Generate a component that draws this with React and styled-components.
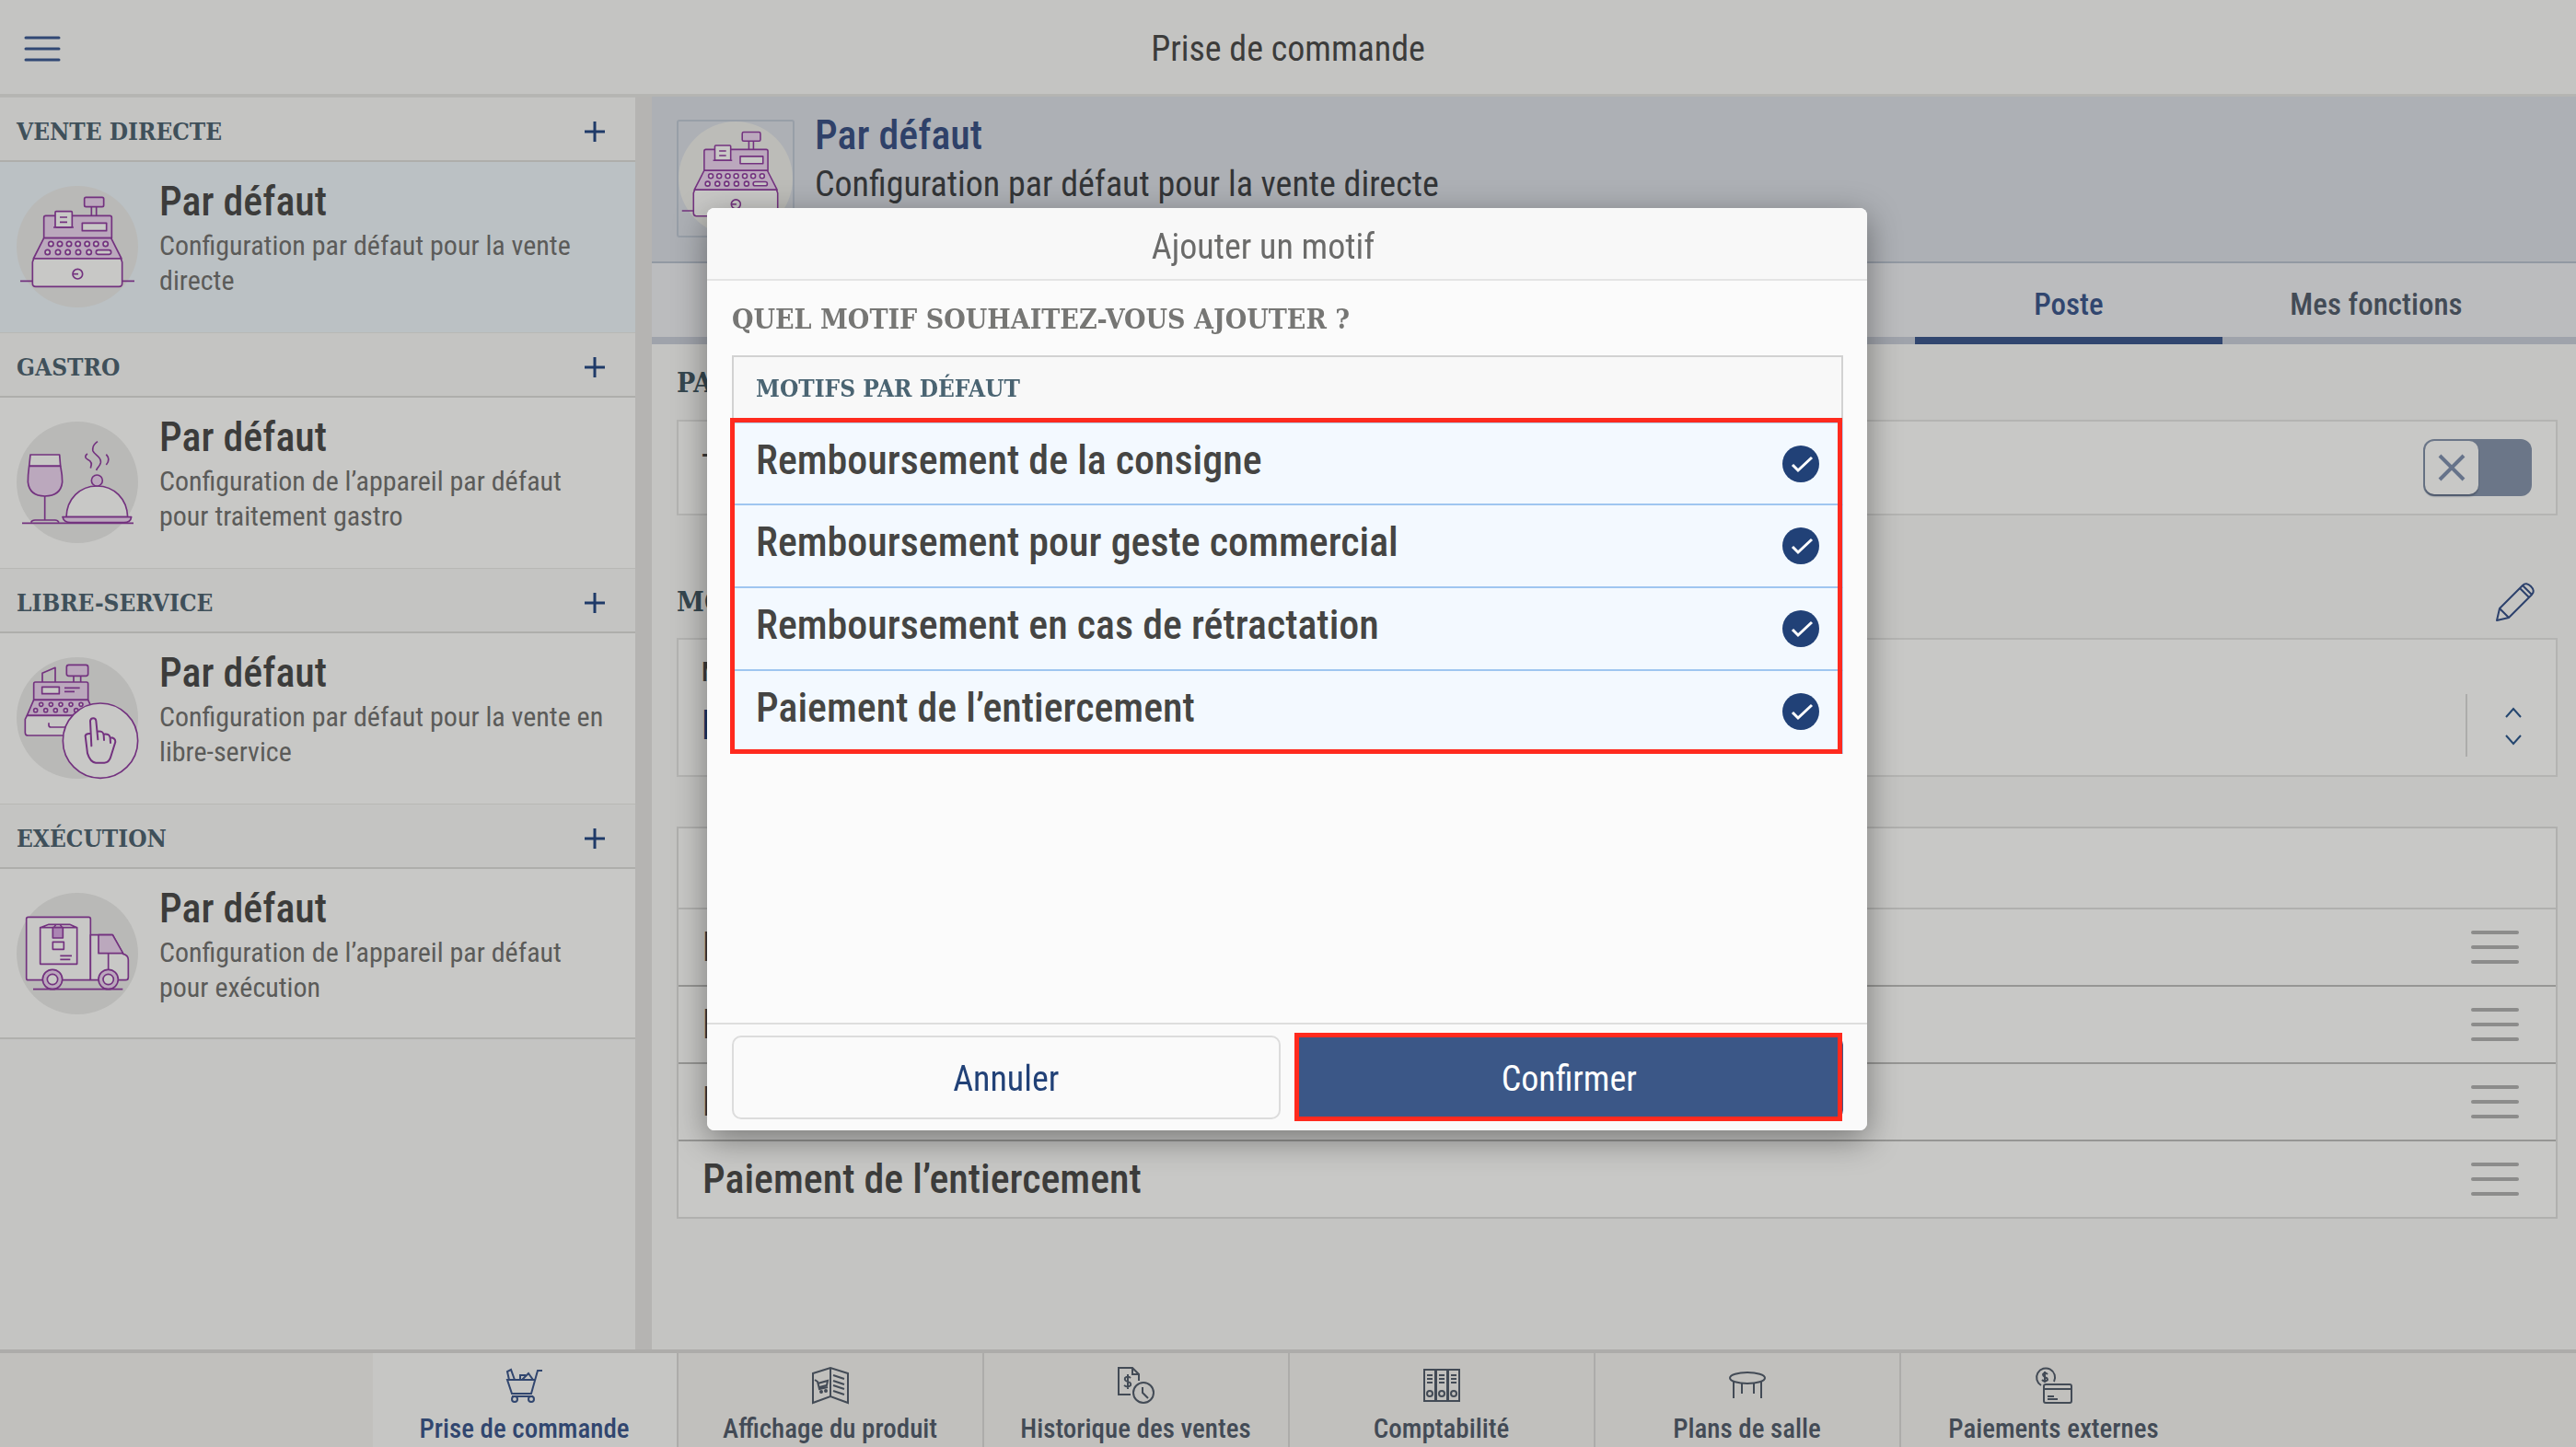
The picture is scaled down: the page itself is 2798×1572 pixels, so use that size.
import React, { useState } from "react";
import styled, { createGlobalStyle } from "styled-components";

const navItems = [
  { label: "Prise de commande", icon: CartIcon },
  { label: "Affichage du produit", icon: BrochureIcon },
  { label: "Historique des ventes", icon: HistoryIcon },
  { label: "Comptabilité", icon: BindersIcon },
  { label: "Plans de salle", icon: TableIcon },
  { label: "Paiements externes", icon: PaymentIcon },
];

const sections = [
  {
    header: "VENTE DIRECTE",
    text: "Configuration par défaut pour la vente directe",
    icon: RegisterIcon,
  },
  {
    header: "GASTRO",
    text: "Configuration de l’appareil par défaut pour traitement gastro",
    icon: GastroIcon,
  },
  {
    header: "LIBRE-SERVICE",
    text: "Configuration par défaut pour la vente en libre-service",
    icon: SelfServiceIcon,
  },
  {
    header: "EXÉCUTION",
    text: "Configuration de l’appareil par défaut pour exécution",
    icon: TruckIcon,
  },
];

const reasons = [
  "Remboursement de la consigne",
  "Remboursement pour geste commercial",
  "Remboursement en cas de rétractation",
  "Paiement de l’entiercement",
];

function App() {
  return (
    <>
      <GlobalStyle />
      <Page>
        <TopBar>
          <MenuButton aria-label="Menu">
            <LinesIcon width={40} height={30} gap={12} stroke={3} />
          </MenuButton>
          <PageTitle>Prise de commande</PageTitle>
        </TopBar>
        <Middle>
          <SideBar />
          <Content />
        </Middle>
        <BottomNav />
      </Page>
      <ReasonDialog />
    </>
  );
}

export default App;

function SideBar() {
  const [selected, setSelected] = useState(0);

  return (
    <SideBarStyled>
      {sections.map((section, index) => (
        <section key={section.header}>
          <SectionHeader>
            <SmallHeading>{section.header}</SmallHeading>
            <AddButton aria-label={`Ajouter ${section.header}`}>
              <svg width="22" height="22" viewBox="0 0 22 22">
                <path d="M11 0V22M0 11H22" />
              </svg>
            </AddButton>
          </SectionHeader>
          <SectionItem
            $active={selected === index}
            onClick={() => setSelected(index)}
          >
            <section.icon />
            <ItemText>
              <ItemTitle>Par défaut</ItemTitle>
              <ItemSub>{section.text}</ItemSub>
            </ItemText>
          </SectionItem>
        </section>
      ))}
    </SideBarStyled>
  );
}

function Content() {
  const [tab, setTab] = useState("Poste");

  return (
    <ContentStyled>
      <Banner>
        <BannerIcon>
          <RegisterIcon />
        </BannerIcon>
        <div>
          <BannerTitle>Par défaut</BannerTitle>
          <BannerSub>Configuration par défaut pour la vente directe</BannerSub>
        </div>
      </Banner>
      <Tabs>
        {["Poste", "Mes fonctions"].map((name) => (
          <Tab key={name} $active={tab === name} onClick={() => setTab(name)}>
            {name}
          </Tab>
        ))}
      </Tabs>
      <Settings>
        <HeadingRow>
          <Heading>PARAMÈTRES</Heading>
        </HeadingRow>
        <SwitchCard>
          <SwitchLabel htmlFor="reason">Toujours demander</SwitchLabel>
          <Switch>
            <HiddenInput id="reason" type="checkbox" />
            <Knob>
              <svg width="28" height="28" viewBox="0 0 28 28">
                <path d="M1 1L27 27M27 1L1 27" />
              </svg>
            </Knob>
          </Switch>
        </SwitchCard>
        <HeadingRow $spaced>
          <Heading>MOTIFS</Heading>
          <EditButton aria-label="Modifier">
            <PencilIcon />
          </EditButton>
        </HeadingRow>
        <SelectCard>
          <SelectLabel htmlFor="default-reason">Motif</SelectLabel>
          <SelectRow>
            <Select id="default-reason">
              {reasons.map((reason) => (
                <option key={reason}>{reason}</option>
              ))}
            </Select>
            <Arrows>
              <svg width="20" height="42" viewBox="0 0 20 42">
                <path d="M2 11L10 2L18 11M2 31L10 40L18 31" />
              </svg>
            </Arrows>
          </SelectRow>
        </SelectCard>
        <ReasonTable>
          <TableTop />
          {reasons.map((reason) => (
            <TableRow key={reason}>
              <span>{reason}</span>
              <DragButton aria-label={`Déplacer ${reason}`}>
                <LinesIcon width={52} height={36} gap={16} stroke={4} />
              </DragButton>
            </TableRow>
          ))}
        </ReasonTable>
      </Settings>
    </ContentStyled>
  );
}

function BottomNav() {
  return (
    <NavStyled>
      {navItems.map((item, index) => (
        <NavItem key={item.label} href="#" $active={index === 0}>
          <item.icon />
          <span>{item.label}</span>
        </NavItem>
      ))}
    </NavStyled>
  );
}

function ReasonDialog() {
  const [checked, setChecked] = useState(reasons);

  function toggle(reason) {
    setChecked((previous) =>
      previous.includes(reason)
        ? previous.filter((r) => r !== reason)
        : [...previous, reason]
    );
  }

  return (
    <Overlay>
      <Dialog role="dialog" aria-labelledby="dialog-title">
        <DialogHeader id="dialog-title">Ajouter un motif</DialogHeader>
        <DialogBody>
          <Question>QUEL MOTIF SOUHAITEZ-VOUS AJOUTER ?</Question>
          <GroupHeader>
            <SmallHeading $light>MOTIFS PAR DÉFAUT</SmallHeading>
          </GroupHeader>
          <CheckList>
            {reasons.map((reason) => (
              <CheckRow key={reason}>
                <span>{reason}</span>
                <HiddenInput
                  type="checkbox"
                  checked={checked.includes(reason)}
                  onChange={() => toggle(reason)}
                />
                <CheckMark viewBox="0 0 40 40">
                  <circle cx="20" cy="20" r="20" />
                  <path d="M11 21L17 27L32 13" />
                </CheckMark>
              </CheckRow>
            ))}
          </CheckList>
        </DialogBody>
        <DialogFooter>
          <DialogButton>Annuler</DialogButton>
          <ConfirmButton>Confirmer</ConfirmButton>
        </DialogFooter>
      </Dialog>
    </Overlay>
  );
}

/* icons */

function LinesIcon({ width, height, gap, stroke }) {
  const middle = height / 2;
  return (
    <svg
      width={width}
      height={height}
      fill="none"
      stroke="currentColor"
      strokeWidth={stroke}
      strokeLinecap="round"
    >
      {[middle - gap, middle, middle + gap].map((y) => (
        <path key={y} d={`M2 ${y}H${width - 2}`} />
      ))}
    </svg>
  );
}

function RegisterIcon() {
  return (
    <Illustration viewBox="54 66 396 396">
      <circle className="disc" cx="252" cy="264" r="198" />
      <path d="M66 376H106M398 376H438" />
      <rect className="tint" x="275" y="103" width="63" height="31" rx="5" />
      <path d="M298 134V163M314 134V163" />
      <path className="tint" d="M143 236V169Q143 163 149 163H358Q364 163 364 169V236Z" />
      <rect className="paper" x="180" y="149" width="55" height="52" rx="3" />
      <path d="M174 201H240M195 168H219M195 184H219" />
      <rect className="paper" x="268" y="187" width="79" height="25" />
      <path className="tint" d="M143 236H362L396 303H109Z" />
      {[166, 195, 225, 254, 284, 313, 344].map((x) => (
        <circle key={x} className="paper" cx={x} cy="255" r="8" />
      ))}
      {[155, 189, 221, 255, 290].map((x) => (
        <circle key={x} className="paper" cx={x} cy="282" r="8" />
      ))}
      <rect className="paper" x="313" y="275" width="49" height="14" rx="7" />
      <path className="paper" d="M110 303H394L398 314V384Q398 394 388 394H116Q106 394 106 384V314Z" />
      <circle cx="253" cy="353" r="16" />
      <path d="M238 353H255" />
    </Illustration>
  );
}

function GastroIcon() {
  return (
    <Illustration viewBox="0 0 396 396">
      <circle className="disc" cx="198" cy="198" r="198" />
      <path className="paper" d="M45 108H140L143 145H41Z" />
      <path className="tint" d="M41 145H143Q149 172 149 197Q144 243 92 243Q42 243 37 197Q37 172 41 145Z" />
      <path d="M92 243V321M47 329Q50 321 60 321H126Q134 321 138 329" />
      <path className="paper" d="M162 311C164 252 206 210 262 210C318 210 360 252 362 311Z" />
      <circle className="tint" cx="262" cy="192" r="18" />
      <path className="tint" d="M150 311H374Q372 329 350 329H176Q154 329 150 311Z" />
      <path d="M18 331H381" />
      <path d="M264 65C254 72 246 84 249 96C254 110 277 112 274 134C272 146 262 150 260 159" />
      <path d="M231 105C222 110 222 120 232 124C246 130 246 140 241 152M292 107C302 118 302 130 292 141" />
    </Illustration>
  );
}

function SelfServiceIcon() {
  return (
    <Illustration viewBox="54 42 396 396">
      <circle className="disc" cx="252" cy="240" r="198" />
      <rect className="tint" x="217" y="67" width="70" height="36" rx="7" />
      <path d="M240 103V123M263 103V123M138 123V94L180 76V123" />
      <path className="tint" d="M110 181V128Q110 123 115 123H282Q287 123 287 128V181Z" />
      <rect className="paper" x="137" y="139" width="56" height="22" />
      <path d="M210 142H260M210 154H243" />
      <path className="tint" d="M110 181H287L310 232H88Z" />
      {[134, 166, 198, 231, 264].map((x) => (
        <circle key={x} className="paper" cx={x} cy="196" r="6" />
      ))}
      {[116, 149, 181, 214, 248].map((x) => (
        <circle key={x} className="paper" cx={x} cy="215" r="6" />
      ))}
      <path className="paper" d="M88 232H310V297H92Q82 297 82 287V244Z" />
      <path d="M159 256V264Q159 270 166 270H214" />
      <circle className="paper" cx="327" cy="314" r="122" />
      <path
        className="bold"
        d="M298 331L294 249Q296 241 304 241Q312 241 313 249L319 310M317 284Q336 280 338 296L339 312M338 293Q357 290 359 305L360 321M359 304Q376 304 376 318L361 366Q356 385 340 386H312Q294 384 285 355L278 298Q280 290 294 291"
      />
    </Illustration>
  );
}

function TruckIcon() {
  return (
    <Illustration viewBox="0 0 396 396">
      <circle className="disc" cx="198" cy="198" r="198" />
      <rect className="paper" x="32" y="79" width="209" height="205" rx="6" />
      <path className="paper" d="M77 113V232H197V113ZL105 103H173L197 113" />
      <rect className="deep" x="118" y="113" width="33" height="34" />
      <path d="M128 103L122 113M142 103L148 113" />
      <path d="M118 160H154V184H118ZM142 205H180M142 217H175" />
      <path className="paper" d="M241 137H313L347 199Q364 203 364 218V275Q364 284 355 284H241Z" />
      <path className="tint" d="M267 137H313L347 197H267Z" />
      <path d="M299 197V250" />
      <circle className="tint" cx="117" cy="282" r="32" />
      <circle className="paper" cx="117" cy="282" r="17" />
      <circle className="tint" cx="299" cy="282" r="32" />
      <circle className="paper" cx="299" cy="282" r="17" />
      <path d="M54 314H346" />
    </Illustration>
  );
}

function PencilIcon() {
  return (
    <svg width="42" height="42" viewBox="0 0 42 42">
      <path d="M1 41L4 28L29 3Q33 -1 38 4Q43 9 39 13L14 38ZM4 28L14 38M26 6L36 16M29 3L39 13" />
    </svg>
  );
}

function CartIcon() {
  return (
    <NavIcon viewBox="0 0 40 40">
      <path d="M39 4H34L27 29H6L1 14H31M3 14L1 5L5 3L9 14M15 14V9H21M17 14L24 7L29 14M6 32H29" />
      <circle cx="9" cy="35" r="3" />
      <circle cx="27" cy="35" r="3" />
    </NavIcon>
  );
}

function BrochureIcon() {
  return (
    <NavIcon viewBox="0 0 40 40">
      <path d="M1 7L20 1L39 7V39L20 32L1 39ZM20 1V32" />
      <path d="M23 9L35 13M23 15L35 19M23 20L35 24M23 26L35 30" />
      <path d="M3 14L6 16L8 24L17 22M6 18L17 15L16 20L8 22" />
      <circle cx="10" cy="27" r="1" />
      <circle cx="15" cy="26" r="1" />
    </NavIcon>
  );
}

function HistoryIcon() {
  return (
    <NavIcon viewBox="0 0 40 40">
      <path d="M14 30H1V1H16L23 8V15M16 1V8H23M27 22V28L33 34" />
      <path d="M14 12Q11 9 8 12Q7 15 11 16Q15 17 14 20Q11 23 7 20M11 8V24" />
      <circle cx="28" cy="28" r="11" />
    </NavIcon>
  );
}

function BindersIcon() {
  return (
    <NavIcon viewBox="0 0 40 40">
      {[1, 14, 27].map((x) => (
        <g key={x}>
          <rect x={x} y="3" width="12" height="34" />
          <path d={`M${x + 3} 9H${x + 9}M${x + 3} 13H${x + 9}M${x + 3} 17H${x + 9}`} />
          <circle cx={x + 6} cy="29" r="3" />
        </g>
      ))}
    </NavIcon>
  );
}

function TableIcon() {
  return (
    <NavIcon viewBox="0 0 40 40">
      <ellipse cx="20" cy="12" rx="19" ry="6" />
      <path d="M5 16V34M35 16V34M14 18V29M27 18V29" />
    </NavIcon>
  );
}

function PaymentIcon() {
  return (
    <NavIcon viewBox="0 0 40 40">
      <path d="M6 20A10 10 0 1 1 20 16" />
      <path d="M13 8Q10 5 8 8Q8 10 10 11Q13 12 13 14Q10 17 7 14M10 5V17" />
      <rect x="9" y="19" width="30" height="20" rx="2" />
      <path d="M9 24H39M13 32H20M13 35H24" />
    </NavIcon>
  );
}

/* styles */

const GlobalStyle = createGlobalStyle`
  * {
    box-sizing: border-box;
  }

  body {
    margin: 0;
    background: #c4c4c2;
    color: #3c3c3b;
    font-family: "Roboto Condensed", Roboto, "Liberation Sans", sans-serif;
    font-size: 38px;
  }

  button,
  select {
    padding: 0;
    border: 0;
    background: none;
    color: inherit;
    font: inherit;
    cursor: pointer;
  }

  h1,
  h2,
  h3,
  p,
  ul {
    margin: 0;
    padding: 0;
    font-weight: 400;
  }

  svg {
    display: block;
    flex-shrink: 0;
    overflow: visible;
  }
`;

const Page = styled.div`
  display: flex;
  flex-direction: column;
  min-height: 100vh;
`;

const TopBar = styled.header`
  display: grid;
  grid-template-columns: 1fr auto 1fr;
  align-items: center;
  height: 105px;
  padding: 4px 26px 0;
  border-bottom: 3px solid #b5b5b2;
`;

const MenuButton = styled.button`
  justify-self: start;
  color: #314874;
`;

const PageTitle = styled.h1`
  font-size: 38px;
  line-height: 48px;
`;

const Middle = styled.div`
  display: flex;
  flex: 1;
`;

const SideBarStyled = styled.aside`
  flex: 0 0 708px;
  border-right: 18px solid #b5b4b2;
`;

const SectionHeader = styled.div`
  display: flex;
  align-items: center;
  justify-content: space-between;
  height: 71px;
  padding: 6px 33px 0 18px;
  border-top: 1px solid #b8b8b5;
  border-bottom: 2px solid #aeaeab;
`;

const SmallHeading = styled.h2`
  color: ${({ $light }) => ($light ? "#4a6472" : "#3f505a")};
  font-family: "DejaVu Serif Condensed", "DejaVu Serif", serif;
  font-size: 26px;
  font-weight: 700;
  line-height: 36px;
`;

const AddButton = styled.button`
  & path {
    stroke: #1f3a68;
    stroke-width: 3;
  }
`;

const SectionItem = styled.button`
  display: flex;
  gap: 23px;
  width: 100%;
  height: 185px;
  padding: 26px 30px 0 18px;
  background: ${({ $active }) => ($active ? "#bbc1c4" : "#c8c8c6")};
  text-align: left;

  section:last-child > & {
    border-bottom: 2px solid #b0b0ad;
  }
`;

const Illustration = styled.svg`
  width: 132px;
  height: 132px;
  fill: none;
  stroke: #73327f;
  stroke-width: 5;
  stroke-linejoin: round;

  & .disc {
    fill: #b9b9b7;
    stroke: none;
  }

  & .tint {
    fill: #bba8bd;
  }

  & .deep {
    fill: #ab85b3;
  }

  & .paper {
    fill: #c8c8c6;
  }

  & .bold {
    stroke-width: 6;
    stroke-linecap: round;
  }
`;

const ItemText = styled.span`
  display: flex;
  flex-direction: column;
`;

const ItemTitle = styled.span`
  font-size: 44px;
  font-weight: 500;
  line-height: 34px;
`;

const ItemSub = styled.span`
  margin-top: 12px;
  color: #5b5b59;
  font-size: 30px;
  line-height: 38px;
`;

const ContentStyled = styled.main`
  flex: 1;
  min-width: 0;
`;

const Banner = styled.div`
  display: flex;
  gap: 22px;
  height: 181px;
  padding: 25px 27px 0;
  border-bottom: 2px solid #9299a3;
  background: #adb0b5;
`;

const BannerIcon = styled.div`
  width: 128px;
  height: 128px;
  border: 2px solid #989fa8;
  border-radius: 3px;

  & svg {
    width: 124px;
    height: 124px;
  }

  & .disc {
    fill: #bcbcb8;
  }
`;

const BannerTitle = styled.h2`
  color: #2f4169;
  font-size: 44px;
  font-weight: 500;
  line-height: 34px;
`;

const BannerSub = styled.p`
  margin-top: 12px;
  color: #333537;
  font-size: 38px;
  line-height: 48px;
`;

const Tabs = styled.div`
  display: flex;
  justify-content: flex-end;
  padding-right: 50px;
  border-bottom: 8px solid #9fa3ab;
  background: #bbbcbe;
`;

const Tab = styled.button`
  width: 334px;
  height: 88px;
  margin-bottom: -8px;
  padding-top: 8px;
  border-bottom: 8px solid
    ${({ $active }) => ($active ? "#31466f" : "transparent")};
  color: ${({ $active }) => ($active ? "#31466f" : "#434b56")};
  font-size: 33px;
  font-weight: 500;
`;

const Settings = styled.div`
  padding: 22px 20px 40px 27px;
`;

const HeadingRow = styled.div`
  display: flex;
  align-items: center;
  justify-content: space-between;
  height: 40px;
  margin: ${({ $spaced }) => ($spaced ? "74px 0 19px" : "0 0 20px")};
  padding-right: 25px;
`;

const Heading = styled.h2`
  color: #36474f;
  font-family: "DejaVu Serif Condensed", "DejaVu Serif", serif;
  font-size: 30px;
  font-weight: 700;
  line-height: 40px;
`;

const Card = styled.div`
  border: 2px solid #b4b4b2;
  background: #c8c8c6;
`;

const SwitchCard = styled(Card)`
  display: flex;
  align-items: center;
  justify-content: space-between;
  height: 104px;
  padding: 0 26px 0 25px;
`;

const SwitchLabel = styled.label`
  font-size: 38px;
`;

const Switch = styled.label`
  display: flex;
  width: 118px;
  height: 62px;
  padding: 2px;
  border-radius: 12px;
  background: #6b7688;
  cursor: pointer;
`;

const Knob = styled.span`
  display: flex;
  align-items: center;
  justify-content: center;
  width: 58px;
  border-radius: 10px;
  background: #c8c8c6;
  box-shadow: 0 2px 2px #4d586a;

  & path {
    stroke: #66738a;
    stroke-width: 4;
  }
`;

const HiddenInput = styled.input`
  position: absolute;
  width: 1px;
  height: 1px;
  margin: 0;
  opacity: 0;
`;

const EditButton = styled.button`
  & path {
    fill: none;
    stroke: #2c416c;
    stroke-width: 2;
    stroke-linejoin: round;
  }
`;

const SelectCard = styled(Card)`
  height: 151px;
  padding: 19px 0 0 25px;
`;

const SelectLabel = styled.label`
  display: block;
  font-size: 29px;
  font-weight: 500;
  line-height: 32px;
`;

const SelectRow = styled.div`
  display: flex;
  height: 68px;
  margin-top: 8px;
`;

const Select = styled.select`
  flex: 1;
  appearance: none;
  color: #1d3766;
  font-size: 44px;
  font-weight: 500;
`;

const Arrows = styled.span`
  display: flex;
  align-items: center;
  justify-content: center;
  width: 98px;
  padding: 2px 0 0 4px;
  border-left: 2px solid #adadab;

  & path {
    fill: none;
    stroke: #24466f;
    stroke-width: 2;
  }
`;

const ReasonTable = styled.ul`
  margin-top: 54px;
  border: 2px solid #b0b0ae;
  background: #c8c8c6;
  list-style: none;
`;

const TableTop = styled.li`
  height: 86px;
`;

const TableRow = styled.li`
  display: flex;
  align-items: center;
  justify-content: space-between;
  height: 84px;
  padding: 0 40px 0 26px;
  border-top: 2px solid #969694;
  font-size: 44px;
  font-weight: 500;

  ${TableTop} + & {
    border-color: #b0b0ae;
  }
`;

const DragButton = styled.button`
  color: #8c8c8b;
`;

const NavStyled = styled.nav`
  display: flex;
  justify-content: center;
  height: 106px;
  padding-left: 3px;
  border-top: 4px solid #adacaa;
  background: #c1c0bd;
`;

const NavItem = styled.a`
  display: flex;
  flex-direction: column;
  align-items: center;
  gap: 9px;
  width: 332px;
  padding-top: 15px;
  border-right: 2px solid #adacaa;
  background: ${({ $active }) => ($active ? "#c6c6c4" : "transparent")};
  color: ${({ $active }) => ($active ? "#31466f" : "#434b56")};
  font-size: 29px;
  font-weight: 500;
  line-height: 36px;
  text-decoration: none;

  &:last-child {
    border-right: 0;
  }
`;

const NavIcon = styled.svg`
  width: 40px;
  height: 40px;
  fill: none;
  stroke: currentColor;
  stroke-width: 2;
`;

const Overlay = styled.div`
  position: fixed;
  inset: 0;
  display: flex;
  align-items: flex-start;
  justify-content: center;
  padding: 226px 2px 0 0;
`;

const Dialog = styled.div`
  display: flex;
  flex-direction: column;
  width: 1260px;
  max-width: 90%;
  border-radius: 8px;
  background: #fbfbfb;
  box-shadow: 0 10px 36px rgba(0, 0, 0, 0.4);
  overflow: hidden;
`;

const DialogHeader = styled.h2`
  height: 79px;
  padding: 0 52px 0 0;
  border-bottom: 2px solid #e4e4e4;
  background: #f8f8f8;
  color: #6b6b6a;
  font-size: 38px;
  line-height: 84px;
  text-align: center;
`;

const DialogBody = styled.div`
  min-height: 806px;
  padding: 22px 26px 0 27px;
`;

const Question = styled.h3`
  margin-bottom: 19px;
  color: #767674;
  font-family: "DejaVu Serif Condensed", "DejaVu Serif", serif;
  font-size: 30px;
  font-weight: 700;
  line-height: 40px;
`;

const GroupHeader = styled.div`
  height: 73px;
  padding: 16px 24px;
  border: 2px solid #d2d2d2;
  border-bottom: 0;
  background: #f8f8f8;
`;

/* red marker drawn over the highlighted element */
const marker = `
  content: "";
  position: absolute;
  border: 5px solid #ff2a1e;
  pointer-events: none;
`;

const CheckList = styled.div`
  position: relative;

  &::after {
    ${marker}
    inset: -5px 1px 0 -2px;
  }
`;

const CheckRow = styled.label`
  display: flex;
  align-items: center;
  justify-content: space-between;
  height: 90px;
  padding: 0 25px;
  border: 1px solid #b5d4f4;
  border-bottom: 2px solid #9fc6f0;
  background: #f3f9ff;
  color: #454543;
  font-size: 44px;
  font-weight: 500;
  cursor: pointer;

  & > span {
    padding-bottom: 8px;
  }

  & + & {
    border-top: 0;
  }
`;

const CheckMark = styled.svg`
  width: 40px;
  height: 40px;

  & circle {
    fill: #214177;
  }

  & path {
    fill: none;
    stroke: #fff;
    stroke-width: 3;
  }

  input:not(:checked) + & {
    opacity: 0.2;
  }
`;

const DialogFooter = styled.div`
  display: flex;
  gap: 16px;
  padding: 12px 26px 12px 27px;
  border-top: 2px solid #dededd;
  background: #fafafa;
`;

const DialogButton = styled.button`
  position: relative;
  flex: 1;
  height: 91px;
  padding-top: 2px;
  border: 2px solid #dcdcdc;
  border-radius: 10px;
  color: #214177;
  font-size: 38px;
`;

const ConfirmButton = styled(DialogButton)`
  border-color: #3b5787;
  background: #3b5787;
  color: #fff;

  &::after {
    ${marker}
    inset: -5px -1px -4px -3px;
  }
`;
